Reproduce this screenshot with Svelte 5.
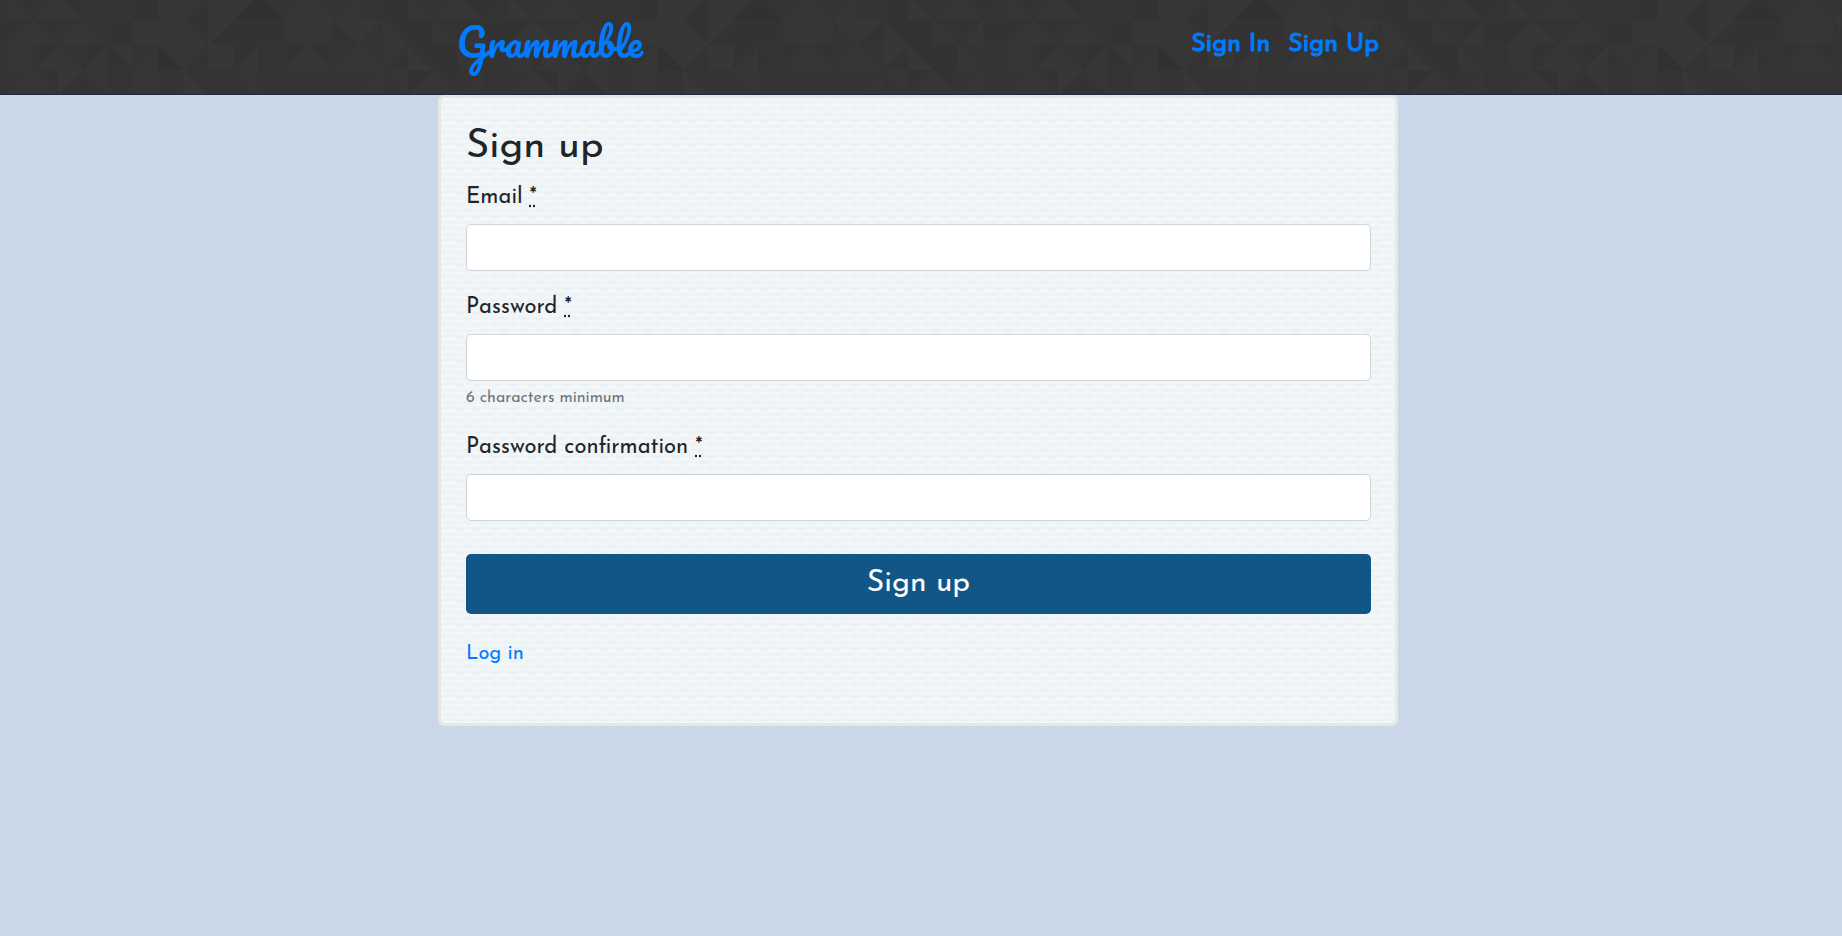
<script>
  // Triangle mosaic: 20 cells of 25px per row, repeating every 500px.
  // Each cell: diagonal (/, \ or -), shade of left part, shade of right part.
  const shades = ['#313131', '#333333', '#343434', '#363636', '#373737'];
  const rows = [
    '\\31 /23 \\31 -22 -22 -11 -33 /31 -33 /30 \\02 /23 \\32 /23 -22 -11 \\42 /23 \\31 /12',
    '/13 \\31 /23 \\32 -11 -33 -33 \\31 /41 -11 -11 -33 -33 \\13 /41 \\31 -11 \\32 /13 -11',
    '-33 /13 \\32 /14 \\13 /23 \\03 /31 -44 /13 \\12 /13 \\31 /23 \\32 /31 \\41 -11 \\32 -22',
    '/23 \\31 /31 \\13 -22 \\33 -22 \\42 -22 \\23 -22 -22 -22 -22 /23 \\23 /13 \\31 /23 -22'
  ];
  const triangles = rows.flatMap((row, r) =>
    row.split(' ').flatMap((cell, c) => {
      const x = c * 25, y = r * 25, e = x + 25, b = y + 25;
      const [dir, left, right] = cell;
      if (dir === '-') return [{ p: `${x},${y} ${e},${y} ${e},${b} ${x},${b}`, f: shades[left] }];
      return dir === '/'
        ? [{ p: `${x},${y} ${e},${y} ${x},${b}`, f: shades[left] }, { p: `${e},${y} ${e},${b} ${x},${b}`, f: shades[right] }]
        : [{ p: `${x},${y} ${e},${b} ${x},${b}`, f: shades[left] }, { p: `${x},${y} ${e},${y} ${e},${b}`, f: shades[right] }];
    })
  );
  const fields = [
    { id: 'email', label: 'Email', type: 'email' },
    { id: 'password', label: 'Password', type: 'password', hint: '6 characters minimum' },
    { id: 'confirmation', label: 'Password confirmation', type: 'password' }
  ];
</script>

<header>
  <svg class="mosaic" aria-hidden="true">
    <defs>
      <pattern id="mosaic" x="8" y="-5" width="500" height="100" patternUnits="userSpaceOnUse">
        <g shape-rendering="crispEdges">
          {#each triangles as t}<polygon points={t.p} fill={t.f} />{/each}
        </g>
      </pattern>
    </defs>
    <rect width="100%" height="100%" fill="url(#mosaic)" />
  </svg>
  <div class="bar">
    <a class="brand" href="#home">Grammable</a>
    <nav>
      <a href="#sign-in">Sign In</a>
      <a href="#sign-up">Sign Up</a>
    </nav>
  </div>
</header>

<div class="page">
  <main>
    <svg class="texture" aria-hidden="true">
      <defs>
        <pattern id="weave" width="18" height="12" patternUnits="userSpaceOnUse">
          <rect width="18" height="12" fill="#eff4f7" />
          <g fill="none" stroke-linecap="round">
            <path d="M3 2Q9 -1 15 2M-6 8Q0 5 6 8M12 8Q18 5 24 8" stroke="#f4f8f9" stroke-width="2" />
            <path d="M5 4Q9 6 13 4M-4 10Q0 12 4 10M14 10Q18 12 22 10" stroke="#e9eff2" />
          </g>
        </pattern>
      </defs>
      <rect width="100%" height="100%" fill="url(#weave)" />
    </svg>
    <div class="content">
      <h1>Sign up</h1>
      <form onsubmit={(e) => e.preventDefault()}>
        {#each fields as f}
          <div class="field">
            <label for={f.id}>{f.label} <abbr title="required">*</abbr></label>
            <input id={f.id} type={f.type} />
            {#if f.hint}<small>{f.hint}</small>{/if}
          </div>
        {/each}
        <button type="submit">Sign up</button>
      </form>
      <a class="login" href="#log-in">Log in</a>
    </div>
  </main>
</div>

<style>
  :global(body) {
    background: #cad7e8;
    color: #212529;
    font-family: "Josefin Sans", Lato, sans-serif;
    font-size: 22px;
    font-weight: 400;
  }
  a {
    color: #007bff;
    text-decoration: none;
  }
  header {
    position: relative;
    height: 94px;
    border-bottom: 1px solid #1f294b;
    background: #343434;
  }
  .mosaic,
  .texture {
    position: absolute;
    inset: 0;
    width: 100%;
    height: 100%;
  }
  .bar {
    position: relative;
    box-sizing: border-box;
    max-width: 960px;
    margin: 0 auto;
    padding: 0 22px 0 16px;
    display: flex;
    justify-content: space-between;
    align-items: flex-start;
  }
  .brand {
    font: 400 38px/84px Pacifico, Lato, cursive;
  }
  nav {
    display: flex;
    gap: 18px;
    font-size: 25px;
    line-height: 90px;
    -webkit-text-stroke: 1px currentColor;
  }
  .page {
    padding-right: 6px;
  }
  main {
    position: relative;
    box-sizing: border-box;
    max-width: 960px;
    margin: 0 auto;
    border: 3px solid #e7e7e7;
    border-radius: 6px;
    overflow: hidden;
  }
  .content {
    position: relative;
    padding: 25px 24px 54px 25px;
  }
  h1 {
    margin: 0 0 10px;
    font-size: 40px;
    font-weight: 400;
    line-height: 48px;
  }
  .field {
    margin-bottom: 20px;
  }
  label {
    display: block;
    margin-bottom: 10px;
    line-height: 33px;
  }
  abbr {
    text-decoration: underline dotted;
  }
  input {
    display: block;
    box-sizing: border-box;
    width: 100%;
    height: 47px;
    padding: 6px 12px;
    border: 1px solid #ced4da;
    border-radius: 5px;
    background: #fff;
    font: inherit;
  }
  small {
    display: block;
    margin-top: 4px;
    color: #6c757d;
    font-size: 16px;
    line-height: 26px;
  }
  button {
    display: block;
    width: 100%;
    height: 60px;
    margin-top: 33px;
    padding: 0 0 2px;
    border: 0;
    border-radius: 5px;
    background: #125688;
    color: #fff;
    font: inherit;
    font-size: 30px;
  }
  .login {
    display: inline-block;
    margin-top: 25px;
    font-size: 20px;
    line-height: 30px;
  }
</style>
